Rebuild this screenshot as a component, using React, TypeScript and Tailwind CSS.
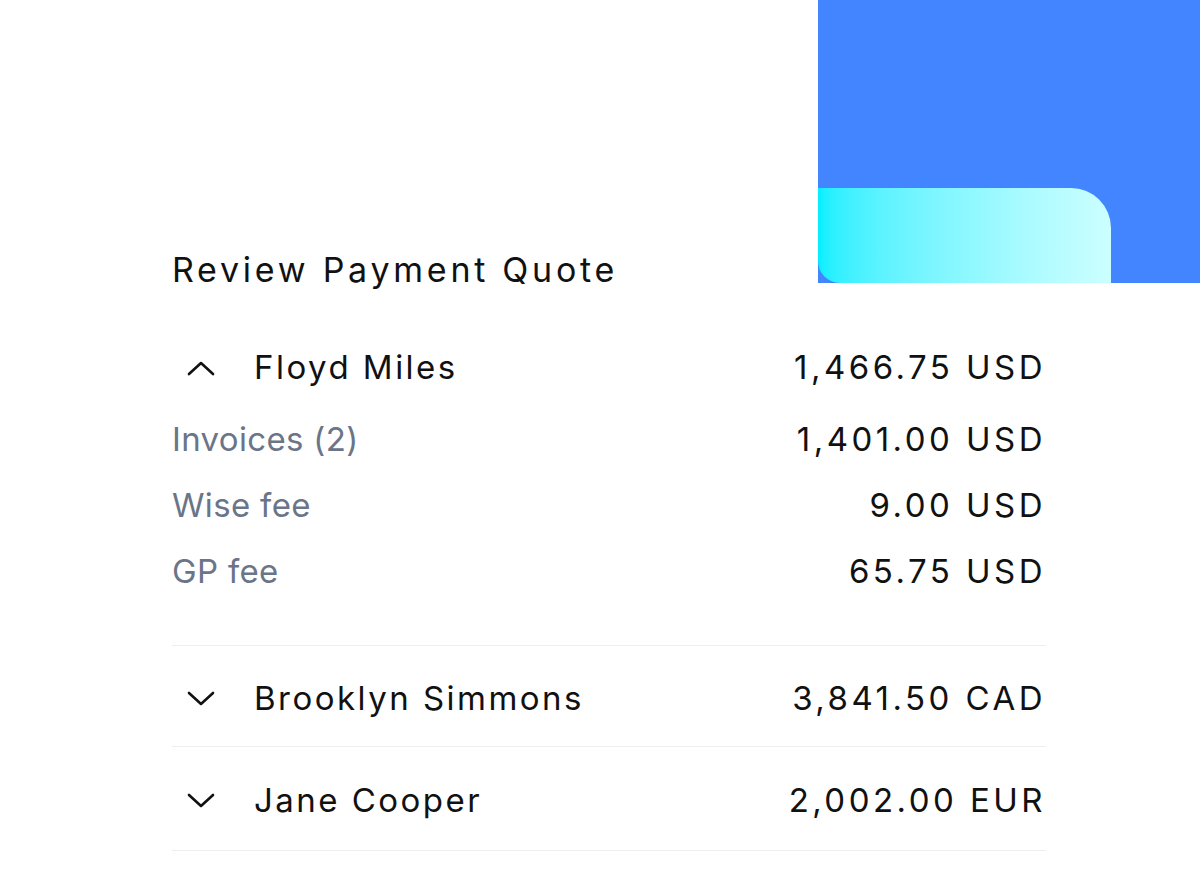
import React from "react";

function Chevron({ up }: { up?: boolean }) {
  return (
    <svg width="28" height="16" viewBox="0 0 28 16" fill="none" className="shrink-0">
      <polyline
        points={up ? "2,14 14,3 26,14" : "2,2 14,13 26,2"}
        stroke="#111111"
        strokeWidth="2.6"
        strokeLinecap="round"
        strokeLinejoin="round"
      />
    </svg>
  );
}

const font = { fontFamily: 'Inter, "Liberation Sans", Arial, sans-serif' };

function Row({ name, amount, up, h, pt }: { name: string; amount: string; up?: boolean; h: string; pt: string }) {
  return (
    <div className={`flex items-center justify-between ${h} ${pt}`}>
      <div className="flex items-center">
        <div className="w-[82px] pl-[15px]">
          <Chevron up={up} />
        </div>
        <span className="text-[33px] tracking-[0.075em]">{name}</span>
      </div>
      <span className="text-[33px] tracking-[0.105em]">{amount}</span>
    </div>
  );
}

export default function App() {
  return (
    <div className="w-[1200px] h-[887px] bg-white overflow-hidden text-[#111111]" style={font}>
      <div className="flex justify-between items-start">
        <div className="pl-[172px] pt-[250px]">
          <h1 className="text-[34px] leading-[40px] tracking-[0.11em] font-normal">Review Payment Quote</h1>
        </div>
        <div className="w-[382px] h-[283px] bg-[#4285FF] flex items-end">
          <div className="w-[293px] h-[95px] rounded-bl-[22px] rounded-tr-[40px] bg-gradient-to-r from-[#00EFFF] to-[#CCFFFF]" />
        </div>
      </div>

      <div className="ml-[172px] w-[874px] mt-[50px]">
        <Row name="Floyd Miles" amount="1,466.75 USD" up h="h-[56px]" pt="pt-0" />

        <div className="mt-[11px]">
          {[
            ["Invoices (2)", "1,401.00 USD"],
            ["Wise fee", "9.00 USD"],
            ["GP fee", "65.75 USD"],
          ].map(([l, r]) => (
            <div key={l} className="flex items-center justify-between h-[66px]">
              <span className="text-[33px] tracking-[0.01em] text-[#6B7588]">{l}</span>
              <span className="text-[33px] tracking-[0.105em]">{r}</span>
            </div>
          ))}
        </div>

        <div className="mt-[40px] border-t-[1.5px] border-[#EEEEEE]" />
        <div className="border-b-[1.5px] border-[#EEEEEE]">
          <Row name="Brooklyn Simmons" amount="3,841.50 CAD" h="h-[100px]" pt="pt-[5px]" />
        </div>
        <div className="border-b-[1.5px] border-[#EEEEEE]">
          <Row name="Jane Cooper" amount="2,002.00 EUR" h="h-[103px]" pt="pt-[5px]" />
        </div>
      </div>
    </div>
  );
}
